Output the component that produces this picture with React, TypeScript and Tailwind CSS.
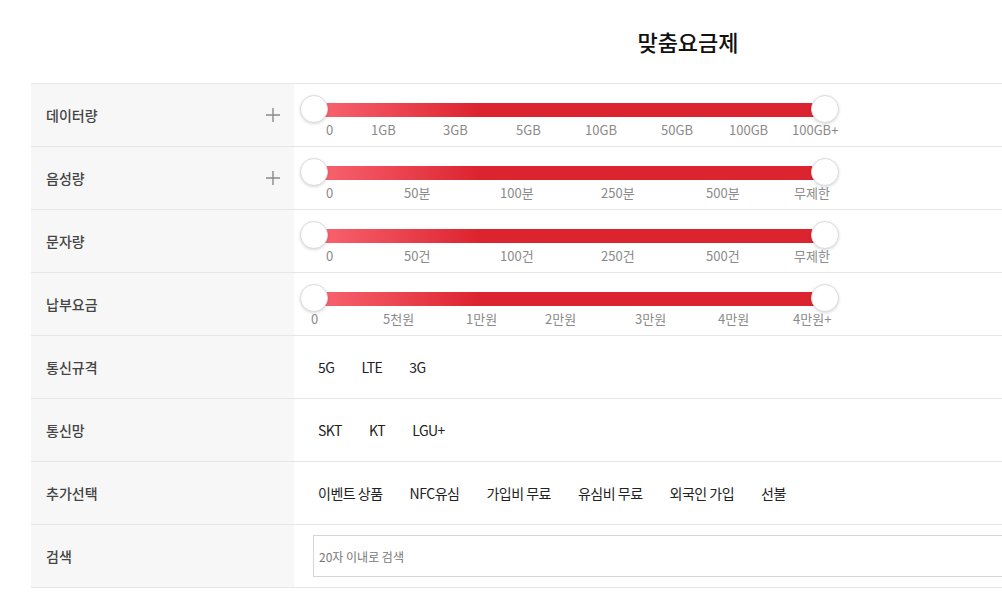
const FONT = { fontFamily: '"Noto Sans CJK KR", "Noto Sans", sans-serif' };

type SliderRow = {
  label: string;
  plus?: boolean;
  // tick labels and their left offset inside the cell
  ticks: [string, number][];
};

const sliders: SliderRow[] = [
  {
    label: "데이터량",
    plus: true,
    ticks: [
      ["0", 32],
      ["1GB", 77],
      ["3GB", 149],
      ["5GB", 222],
      ["10GB", 291],
      ["50GB", 367],
      ["100GB", 435],
      ["100GB+", 498],
    ],
  },
  {
    label: "음성량",
    plus: true,
    ticks: [
      ["0", 32],
      ["50분", 110],
      ["100분", 206],
      ["250분", 307],
      ["500분", 412],
      ["무제한", 500],
    ],
  },
  {
    label: "문자량",
    ticks: [
      ["0", 32],
      ["50건", 110],
      ["100건", 206],
      ["250건", 307],
      ["500건", 412],
      ["무제한", 500],
    ],
  },
  {
    label: "납부요금",
    ticks: [
      ["0", 17],
      ["5천원", 89],
      ["1만원", 172],
      ["2만원", 251],
      ["3만원", 341],
      ["4만원", 424],
      ["4만원+", 499],
    ],
  },
];

const options = [
  { label: "통신규격", items: ["5G", "LTE", "3G"] },
  { label: "통신망", items: ["SKT", "KT", "LGU+"] },
  {
    label: "추가선택",
    items: ["이벤트 상품", "NFC유심", "가입비 무료", "유심비 무료", "외국인 가입", "선불"],
  },
];

function Plus() {
  return (
    <svg width="14" height="14" viewBox="0 0 14 14" className="shrink-0">
      <path d="M7 0v14M0 7h14" stroke="#8a8a8a" strokeWidth="1.4" />
    </svg>
  );
}

function Thumb({ side }: { side: "left" | "right" }) {
  return (
    <span
      className={`absolute top-[11px] h-[28px] w-[28px] rounded-full border border-[#dcdcdc] bg-white shadow-[0_1px_3px_rgba(0,0,0,0.15)] ${
        side === "left" ? "left-[6px]" : "left-[517px]"
      }`}
    />
  );
}

function LabelCell({ label, plus }: { label: string; plus?: boolean }) {
  return (
    <div className="flex w-[263px] shrink-0 items-center justify-between bg-[#f7f7f7] pl-[15px] pr-[14px] text-[14px] font-medium text-[#444]">
      <span>{label}</span>
      {plus && <Plus />}
    </div>
  );
}

export default function App() {
  return (
    <div className="w-full overflow-hidden bg-white" style={FONT}>
      <div className="ml-[31px] w-[1314px]">
        <h1 className="flex h-[83px] items-center justify-center pb-[1px] text-[22px] font-medium text-[#111]">
          맞춤요금제
        </h1>

        <div className="border-t border-[#e6e6e6]">
          {sliders.map((row) => (
            <div key={row.label} className="flex h-[63px] border-b border-[#e6e6e6]">
              <LabelCell label={row.label} plus={row.plus} />
              <div className="relative flex-1">
                <div className="ml-[20px] mt-[19px] h-[14px] w-[511px] bg-[linear-gradient(to_right,#f96672_0%,#ec4753_15%,#dc2430_32%,#dc2430_100%)]" />
                <Thumb side="left" />
                <Thumb side="right" />
                <div className="relative mt-[4px] h-[18px] text-[13px] leading-[18px] text-[#8a8a8a]">
                  {row.ticks.map(([t, x]) => (
                    <span key={t} className="absolute top-0" style={{ left: x }}>
                      {t}
                    </span>
                  ))}
                </div>
              </div>
            </div>
          ))}

          {options.map((row) => (
            <div key={row.label} className="flex h-[63px] border-b border-[#e6e6e6]">
              <LabelCell label={row.label} />
              <div className="flex flex-1 items-center gap-[27px] pl-[24px] text-[14px] tracking-[-0.5px] text-[#222]">
                {row.items.map((it) => (
                  <span key={it}>{it}</span>
                ))}
              </div>
            </div>
          ))}

          <div className="flex h-[63px] border-b border-[#e6e6e6]">
            <LabelCell label="검색" />
            <div className="flex flex-1 items-center pl-[19px]">
              <input
                type="text"
                placeholder="20자 이내로 검색"
                className="h-[42px] w-full border border-[#d5d5d5] px-[5px] text-[12px] text-[#333] outline-none placeholder:text-[#777]"
              />
            </div>
          </div>
        </div>
      </div>
    </div>
  );
}
